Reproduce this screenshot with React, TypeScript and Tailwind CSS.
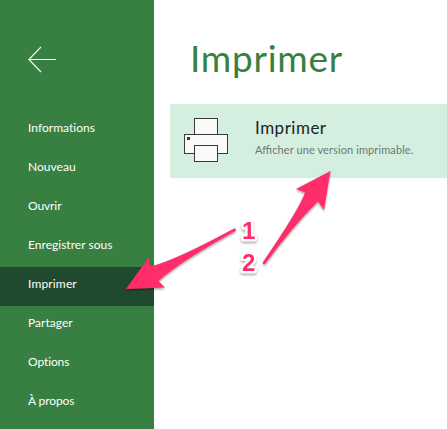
import React from "react";

const items = [
  { label: "Informations", spacing: "tracking-[0.02px]" },
  { label: "Nouveau", spacing: "tracking-[0.02px]" },
  { label: "Ouvrir", spacing: "tracking-[-0.1px]" },
  { label: "Enregistrer sous", spacing: "tracking-[0.02px]" },
  { label: "Imprimer", spacing: "tracking-[0.15px]", active: true },
  { label: "Partager", spacing: "tracking-[0.02px]" },
  { label: "Options", spacing: "tracking-[-0.1px]" },
  { label: "À propos", spacing: "tracking-[-0.1px]" },
];

function Printer() {
  return (
    <svg className="h-[44px] w-[44px] shrink-0" viewBox="0 0 44 44" fill="#fafafa" stroke="#3a3a3a" shapeRendering="crispEdges">
      <rect x="10.5" y="0.5" width="23" height="20" />
      <rect x="0.5" y="16.5" width="43" height="19" />
      <rect x="10.5" y="27.5" width="23" height="16" />
      <rect x="3" y="19" width="3" height="3" fill="#3a3a3a" stroke="none" />
    </svg>
  );
}

function Annotations() {
  return (
    <svg className="pointer-events-none absolute inset-0" width="447" height="429" viewBox="0 0 447 429">
      <defs>
        <filter id="shadow" x="-20%" y="-20%" width="140%" height="140%">
          <feDropShadow dx="0" dy="1.5" stdDeviation="1.2" floodColor="#000" floodOpacity="0.4" />
        </filter>
      </defs>
      <g fill="#ff2d6b" filter="url(#shadow)">
        <path d="M126 289 L148.5 257.5 L150.5 266.5 Q176 260 234 228.5 Q237 228.5 235.5 231 Q181 261 158.5 281 L165 287.5 Z" />
        <path d="M330.5 171 L296 189 L305 192.5 Q300 208 263 262 Q262 265 265 264 Q293 226 318 201.5 L324 210 Z" />
      </g>
      <g
        filter="url(#shadow)"
        fill="#ff2d6b"
        stroke="#fff"
        strokeWidth="4.5"
        strokeLinejoin="round"
        paintOrder="stroke"
        className="font-['Liberation_Sans',sans-serif] text-[24px] font-bold"
      >
        <text x="242" y="239">1</text>
        <text x="242" y="271">2</text>
      </g>
    </svg>
  );
}

export default function App() {
  return (
    <div className="relative flex h-[429px] w-[447px] overflow-hidden bg-white font-['Lato',sans-serif]">
      <aside className="flex w-[154px] shrink-0 flex-col bg-[#387f42] text-white">
        <div className="h-[111px] pt-[46px] pl-7">
          <svg className="h-[27px] w-[28px]" viewBox="0 0 28 27" fill="none" stroke="#fff" strokeWidth="1.1">
            <path d="M28 13.5H.8M13 1 .8 13.5 13 26" />
          </svg>
        </div>
        <nav>
          {items.map((item) => (
            <a
              key={item.label}
              className={`flex h-[39px] items-center pb-[5px] pl-7 text-[12px] leading-4 whitespace-nowrap ${item.spacing} ${item.active ? "bg-[#1f4a2e]" : ""}`}
            >
              {item.label}
            </a>
          ))}
        </nav>
      </aside>
      <main className="flex min-w-0 flex-1 flex-col pl-4">
        <h1 className="h-[104px] pt-[34px] pl-[20px] text-[37px] leading-[48px] tracking-[0.75px] text-[#387f42]">Imprimer</h1>
        <button className="flex h-[74px] bg-[#d4efe0] pt-[14px] pl-[14px] text-left">
          <Printer />
          <span className="ml-[27px] flex flex-col whitespace-nowrap">
            <span className="text-[17px] leading-5 tracking-[0.5px] text-[#222]">Imprimer</span>
            <span className="mt-[4px] text-[11px] leading-4 tracking-[0.1px] text-[#6b7871] [font-feature-settings:'liga'_1]">
              Afficher une version imprimable.
            </span>
          </span>
        </button>
      </main>
      <Annotations />
    </div>
  );
}
